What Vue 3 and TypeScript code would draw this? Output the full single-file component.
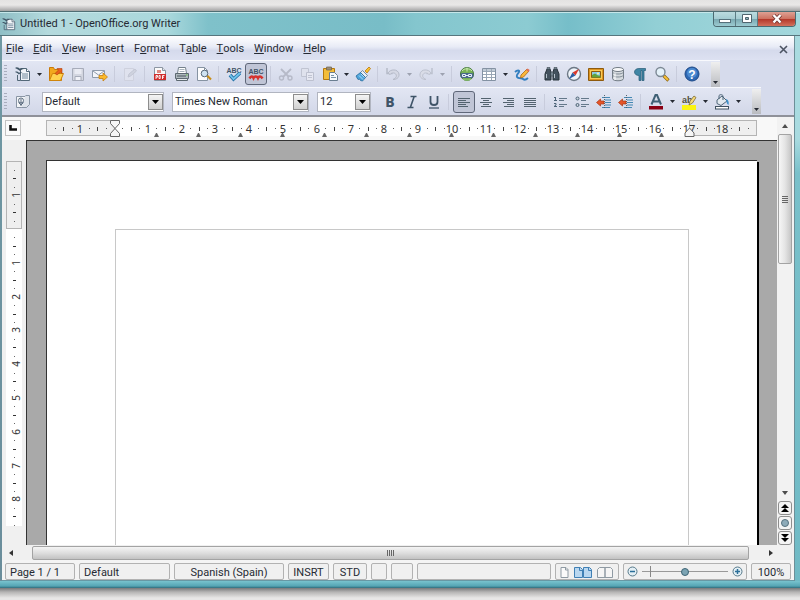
<script setup lang="ts">
import { ref } from 'vue'

interface ToolItem {
  kind: 'tool' | 'arrow' | 'sep'
  icon?: string
  label?: string
  pressed?: boolean
  disabled?: boolean
}

const tool = (icon: string, label: string): ToolItem => ({ kind: 'tool', icon, label })
const off = (icon: string, label: string): ToolItem => ({ kind: 'tool', icon, label, disabled: true })
const on = (icon: string, label: string): ToolItem => ({ kind: 'tool', icon, label, pressed: true })
const arrow = (label: string, disabled = false): ToolItem => ({ kind: 'arrow', label, disabled })
const sep: ToolItem = { kind: 'sep' }

const icons: Record<string, string> = {
  doc: '<path d="M5.500 2.500h6l3 3v9h-9z" fill="#f2f5f8" stroke="#536878"/><path d="M11.500 2.500v3h3" fill="#fff" stroke="#536878"/><path d="M7 8h6M7 10h6M7 12h6" stroke="#71899b"/><path d="M0 2c2-1.500 4 0 5 1 1.500-1 3-1 4 0-2 0-3 1-4 2C4 4 2 3 0 2zM0 6c2-1 3 0 4 .700C5 6 6.500 6 7.500 7 6 7 5 7.500 4 8.500 3 7.500 1.500 6.500 0 6z" fill="#3f5566"/><path d="M2.500 9v5.500h3" stroke="#536878" fill="none"/>',
  open: '<path d="M1.500 14.500v-13h4l1 2h7v11z" fill="#f2a81d" stroke="#c7790a"/><path d="M1.500 14.500l3-7h11l-3 7z" fill="#ffd24f" stroke="#cf850b"/><path d="M7 7.500l3.500-3.500L9 2.500h5v5L12.500 6 9 9z" fill="#e8601c" stroke="#b03f0c" stroke-width=".6"/>',
  save: '<path d="M2.500 2.500h11v12h-11z" fill="#d3d6e0" stroke="#a7acba"/><path d="M4.500 3h7v5h-7z" fill="#e9ebf3"/><path d="M5 10.500h6v4H5z" fill="#f1f2f8" stroke="#a7acba"/>',
  mail: '<path d="M.500 4.500h12v7H.500z" fill="#f4f5f9" stroke="#8f9bab"/><path d="M1 5l5.500 4L12 5" fill="none" stroke="#8f9bab"/><path d="M7 9.500h4V7l4.500 4-4.500 4v-2.500H7z" fill="#fbb92a" stroke="#c57d0c" stroke-width=".8"/>',
  edit: '<path d="M2.500 2.500h9v12h-9z" fill="#dfe2ee" stroke="#ced1de"/><path d="M6 11l1-3 6-5 1.500 2-6 5z" fill="#cfd3df" stroke="#c3c7d5"/>',
  pdf: '<path d="M2.500 1.500h8l3 3v10h-11z" fill="#fafafa" stroke="#8c96a3"/><path d="M10.500 1.500v3h3" fill="#dfe4ea" stroke="#8c96a3"/><path d="M5 4h4v3H5z" fill="#df8780"/><rect x="2" y="8" width="12" height="6" fill="#cf2c2c"/><path d="M4 13V9.500h1.500v1.700H4M7 9.500v3h1.200V9.500zM10.500 13V9.500h2M10.500 11.200h1.500" stroke="#fff" fill="none" stroke-width=".9"/>',
  print: '<path d="M4.500 1.500h7l1 6h-9z" fill="#fff" stroke="#74818c"/><path d="M5.500 3.500h5M5.500 5.500h5" stroke="#a9b4bd"/><path d="M1.500 7.500h13v5h-13z" fill="#aeb8bd" stroke="#5d6971"/><path d="M2.500 12.500h11v2h-11z" fill="#e6eaec" stroke="#5d6971"/><path d="M3 10h9" stroke="#4a575e"/><path d="M12 9h1.500" stroke="#5fc13d"/>',
  preview: '<path d="M1.500 1.500h7l3 3v10h-10z" fill="#fcfcfd" stroke="#8693a2"/><path d="M8.500 1.500v3h3" fill="none" stroke="#8693a2"/><path d="M11 9.500l4 4" stroke="#c98e17" stroke-width="2.200"/><circle cx="8.500" cy="7.500" r="3.300" fill="#cfe3f2" stroke="#596b7c"/>',
  spell: '<text x="8" y="6.500" text-anchor="middle" font-family="Liberation Sans" font-size="7" font-weight="700" fill="#3f5468">ABC</text><path d="M4 9l3.500 4L14 7" fill="none" stroke="#2674a8" stroke-width="3.600"/><path d="M4 9l3.500 4L14 7" fill="none" stroke="#70c4ec" stroke-width="1.800"/>',
  autospell: '<text x="8" y="7.500" text-anchor="middle" font-family="Liberation Sans" font-size="7" font-weight="700" fill="#3f5468">ABC</text><path d="M1.500 12.500c1.500-2.500 3-2.500 4-.500 1-2 3.500-2 4.500 0 1-2 3-2 4.500.500" fill="none" stroke="#d5332d" stroke-width="2.600"/>',
  cut: '<path d="M3 3l8 8M13 3l-8 8" stroke="#b6bac8" stroke-width="1.800"/><circle cx="3.500" cy="12" r="2" fill="none" stroke="#b6bac8" stroke-width="1.400"/><circle cx="12" cy="12" r="2" fill="none" stroke="#b6bac8" stroke-width="1.400"/>',
  copy: '<path d="M1.500 2.500h7v8h-7z" fill="#dfe2ed" stroke="#c0c4d2"/><path d="M6.500 6.500h7v8h-7z" fill="#e6e8f2" stroke="#bcc0cf"/><path d="M8 9.500h4M8 11.500h4" stroke="#c0c4d2"/>',
  paste: '<path d="M1.500 2.500h11v11h-11z" fill="#f3bd3a" stroke="#b4790f"/><path d="M4.500 1h5v3h-5z" fill="#9c8f78" stroke="#6e634f" stroke-width=".7"/><path d="M7.500 6.500h5l3 3v5h-8z" fill="#f7fafc" stroke="#6a7e90"/><path d="M9 9.500h3M9 11.500h5" stroke="#7892a8"/>',
  brush: '<path d="M10 5l4-4 1.500 1.500L12 7z" fill="#fac232" stroke="#b9790c" stroke-width=".8"/><path d="M7.500 4.500l5 5-2 2-5-5z" fill="#e7edf3" stroke="#5c7890" stroke-width=".8"/><path d="M5.500 6.500l5 5-3 3.500-2-.500-1-1.500-1.500.500L1 10z" fill="#4fa6dc" stroke="#27699b" stroke-width=".8"/><path d="M4 9.500l4 4M6 8l3.500 3.500" stroke="#b4dcf4"/>',
  undo: '<path d="M2 2v5.500h5.500" fill="none" stroke="#b5bac8" stroke-width="1.500"/><path d="M3 7c2-4 10-4.500 11 1 .5 4-3 5.500-6 5.500 3-1.500 4-3 3-5-1.500-2.500-5-1.500-6 0z" fill="#d5d8e4" stroke="#b5bac8"/>',
  redo: '<path d="M14 2v5.500H8.500" fill="none" stroke="#bcc1ce" stroke-width="1.500"/><path d="M13 7C11 3 3 2.500 2 8c-.5 4 3 5.500 6 5.500-3-1.500-4-3-3-5 1.500-2.500 5-1.500 6 0z" fill="#d9dce7" stroke="#bcc1ce"/>',
  link: '<circle cx="8" cy="8" r="6.500" fill="#77b255" stroke="#41773a"/><path d="M3 5c2-3 8-3 10 0M8 1.500v4" stroke="#cce9b1" fill="none"/><rect x="1.500" y="7" width="13" height="5" rx="2" fill="#49678b"/><path d="M3.500 8.500h3v2h-3zM9.500 8.500h3v2h-3zM6 9.500h4" fill="none" stroke="#e8f2fa"/><path d="M4 13c2 1.500 6 1.500 8 0" stroke="#9ed57c" fill="none"/>',
  table: '<path d="M1.500 2.500h13v12h-13z" fill="#fff" stroke="#8492a3"/><path d="M2 3h12v2.500H2z" fill="#c0cbd6"/><path d="M2 5.500h12M2 8.500h12M2 11.500h12M5.500 3v11M10.500 3v11" stroke="#9aa7b6"/>',
  draw: '<path d="M1 6c2-2 5-2 4 0s-3 3-2 5 5 1 6 2 3 1 5-1" fill="none" stroke="#337fc0" stroke-width="1.800"/><path d="M7 9l6-6 2 2-5.500 6-3 1z" fill="#fbb73b" stroke="#a96814" stroke-width=".8"/><path d="M12 4l1.500-1.500L15.700 4l-1.200 2z" fill="#de705a"/>',
  find: '<path d="M3 3h3l1 3v8H1V8zM13 3h-3L9 6v8h6V8z" fill="#43525f" stroke="#29343d"/><path d="M3 1.500h3v2H3zM10 1.500h3v2h-3zM6.500 6h3v4h-3z" fill="#73838f" stroke="#29343d" stroke-width=".5"/><path d="M2.500 8v4M10.500 8v4" stroke="#b3c0ca"/>',
  navigator: '<circle cx="8" cy="8" r="6.500" fill="#eef4fa" stroke="#6d7986" stroke-width="1.400"/><path d="M13 3L9.500 9.500l-3-3z" fill="#d93a2d"/><path d="M3 13l3.500-6.500 3 3z" fill="#2a5fa5"/>',
  gallery: '<path d="M.500 2.500h15v12H.500z" fill="#dc9420" stroke="#8e5a0d"/><path d="M2 4h12v9H2z" fill="#f9cb55"/><path d="M3.500 5.500h9v6h-9z" fill="#8acbe8" stroke="#8e5a0d"/><path d="M4 11.500V9l3-1.500 3 2h2.500v2z" fill="#63a43b"/><circle cx="10" cy="7.500" r="1" fill="#fff8a0"/>',
  data: '<path d="M2.500 3.500v9c0 3 11 3 11 0v-9" fill="#d5dade" stroke="#737d86"/><ellipse cx="8" cy="3.500" rx="5.500" ry="2" fill="#f7f8f9" stroke="#737d86"/><path d="M3 6.500c1 2 9 2 10 0M3 9.500c1 2 9 2 10 0" fill="none" stroke="#838e97"/><path d="M5 7v7" stroke="#fff"/>',
  pilcrow: '<path d="M13.500 2.500v2H12v10h-2v-10H9v10H7v-5c-6 0-6-7 0-7z" fill="#3f86a5" stroke="#275a75" stroke-width=".7"/>',
  zoom: '<path d="M9.500 9.500l5 5" stroke="#8e6814" stroke-width="3.200"/><path d="M10 10l4 4" stroke="#f7c139" stroke-width="1.800"/><circle cx="6.500" cy="6" r="4.500" fill="#e4f1f9" stroke="#7c8894" stroke-width="1.400"/>',
  help: '<circle cx="8" cy="8" r="7" fill="#2d68b4" stroke="#1d4987"/><circle cx="8" cy="7" r="5" fill="#4e8bd0"/><text x="8" y="12.500" text-anchor="middle" font-family="Liberation Sans" font-size="12" font-weight="700" fill="#fff">?</text>',
  styles: '<path d="M1.500 2.500h10v11h-10z" fill="#f2f4f7" stroke="#8995a5"/><path d="M10.500 1.500h4v9l-3 3h-5" fill="#dde2ea" stroke="#8995a5"/><circle cx="6" cy="6.500" r="2.500" fill="none" stroke="#5c6d80"/><path d="M6 5v7M3.500 8.500L6 11l2.500-2.500" stroke="#5c6d80" fill="none"/>',
  italic: '<path d="M6.500 2.500h6M3.500 13.500h6M10 3L6.500 13" stroke="#3f5468" stroke-width="1.600"/>',
  underline: '<path d="M4.500 2v6c0 4 7 4 7 0V2" fill="none" stroke="#3f5468" stroke-width="1.800"/><path d="M3 14h10" stroke="#3f5468" stroke-width="1.300"/>',
  left: '<path d="M2 4.500h12M2 6.500h8M2 8.500h12M2 10.500h8M2 12.500h10" stroke="#53636f"/>',
  center: '<path d="M3 4.500h10M5 6.500h6M2 8.500h12M5 10.500h6M3 12.500h10" stroke="#53636f"/>',
  right: '<path d="M3 4.500h11M7 6.500h7M3 8.500h11M7 10.500h7M4 12.500h10" stroke="#53636f"/>',
  justify: '<path d="M2 4.500h12M2 6.500h12M2 8.500h12M2 10.500h12M2 12.500h12" stroke="#53636f"/>',
  numbers: '<path d="M3.500 3v4M2 3.500h1.500M2 6.500h3M2 9.500h2v1.500L2 12.500h3" fill="none" stroke="#4d6478"/><path d="M7 4.500h8M7 6.500h5M7 10.500h8M7 12.500h5" stroke="#64788a"/>',
  bullets: '<circle cx="3.500" cy="4.500" r="1.500" fill="#c9d2da" stroke="#4d6478"/><circle cx="3.500" cy="11" r="1.500" fill="#c9d2da" stroke="#4d6478"/><path d="M7 4.500h8M7 6.500h5M7 10.500h8M7 12.500h5" stroke="#64788a"/>',
  outdent: '<path d="M6 3.500h8M9 6h6M9 8.500h6M9 11h6M6 13.500h8" stroke="#4588b3" stroke-width="1.200"/><path d="M8.500 1v14" stroke="#53636f" stroke-dasharray="1 1"/><path d="M.500 8.500l4-3.500v2H8v3H4.500v2z" fill="#e6552a" stroke="#a83713" stroke-width=".7"/>',
  indent: '<path d="M6 3.500h8M9 6h6M9 8.500h6M9 11h6M6 13.500h8" stroke="#4588b3" stroke-width="1.200"/><path d="M8.500 1v14" stroke="#53636f" stroke-dasharray="1 1"/><path d="M.500 8.500l4-3.500v2H8v3H4.500v2z" fill="#e6552a" stroke="#a83713" stroke-width=".7"/>',
  color: '<path d="M3.500 10.500L7.500 1h1.500l4 9.500M5 7.500h6.500" fill="none" stroke="#3f6075" stroke-width="2"/><rect x="1" y="12" width="14" height="3.500" fill="#8b0014"/>',
  highlight: '<rect x="1" y="11" width="14" height="5" fill="#fbf413"/><text x="1" y="9" font-family="Liberation Sans" font-size="9" font-weight="700" fill="#514f3a">ab</text><path d="M8 11l1-4 4-5 2 1.500-3.500 5.500z" fill="#f6d979" stroke="#7a6a34" stroke-width=".8"/>',
  fill: '<path d="M3 6l5-4 5 5-6 4.500-4-2z" fill="#e2e9ef" stroke="#4d6478"/><path d="M5 5V2c0-2 4-1.500 4 0v4" fill="none" stroke="#4d6478"/><path d="M12 5c3 1 3 4 2.500 6-2-1-2-3-2.500-6z" fill="#3e91c8"/><rect x="1.500" y="12.500" width="13" height="2.500" fill="#fff" stroke="#3f5160"/>',
}

const standardBar: ToolItem[] = [
  tool('doc', 'New'), arrow('New options'), tool('open', 'Open'), off('save', 'Save'), tool('mail', 'Document as E-mail'), sep,
  off('edit', 'Edit File'), sep,
  tool('pdf', 'Export as PDF'), tool('print', 'Print'), tool('preview', 'Page Preview'), sep,
  tool('spell', 'Spellcheck'), on('autospell', 'AutoSpellcheck'), sep,
  off('cut', 'Cut'), off('copy', 'Copy'), tool('paste', 'Paste'), arrow('Paste options'), tool('brush', 'Format Paintbrush'), sep,
  off('undo', 'Undo'), arrow('Undo history', true), off('redo', 'Redo'), arrow('Redo history', true), sep,
  tool('link', 'Hyperlink'), tool('table', 'Insert Table'), arrow('Table size'), tool('draw', 'Show Draw Functions'), sep,
  tool('find', 'Find & Replace'), tool('navigator', 'Navigator'), tool('gallery', 'Gallery'), tool('data', 'Data Sources'),
  tool('pilcrow', 'Nonprinting Characters'), tool('zoom', 'Zoom'), sep,
  tool('help', 'Help'),
]

const formatBar: ToolItem[] = [
  tool('italic', 'Italic'), tool('underline', 'Underline'), sep,
  on('left', 'Align Left'), tool('center', 'Centered'), tool('right', 'Align Right'), tool('justify', 'Justified'), sep,
  tool('numbers', 'Numbering'), tool('bullets', 'Bullets'), tool('outdent', 'Decrease Indent'), tool('indent', 'Increase Indent'), sep,
  tool('color', 'Font Color'), arrow('Font colors'), tool('highlight', 'Highlighting'), arrow('Highlight colors'),
  tool('fill', 'Background Color'), arrow('Background colors'),
]

const menus = ['_File', '_Edit', '_View', '_Insert', 'F_ormat', 'T_able', '_Tools', '_Window', '_Help'].map((m) => {
  const i = m.indexOf('_')
  return { before: m.slice(0, i), key: m[i + 1], after: m.slice(i + 2) }
})

const style = ref('Default')
const font = ref('Times New Roman')
const size = ref('12')
const zoom = ref(50)

// Ruler scale: pixels per centimetre, and offset of the text area's edge.
const CM = 33.8
const MARGIN = 68

function marks(from: number, to: number) {
  const list: { pos: number; label: string; half: boolean }[] = []
  for (let q = from; q <= to; q++) {
    if (q === 0) continue
    list.push({
      pos: Math.round(MARGIN + (q * CM) / 4),
      label: q % 4 === 0 ? String(Math.abs(q / 4)) : '',
      half: Math.abs(q % 4) === 2,
    })
  }
  return list
}

const hMarks = marks(-7, 75)
const vMarks = marks(-7, 35)
const tabStops = Array.from({ length: 13 }, (_, i) => Math.round(MARGIN + (i + 1) * CM * 1.245))
</script>

<template>
  <div class="desktop">
    <div class="window">
      <header class="titlebar">
        <svg class="icon" viewBox="0 0 16 16" v-html="icons.doc"></svg>
        <h1>Untitled 1 - OpenOffice.org Writer</h1>
        <div class="caption">
          <button type="button" aria-label="Minimize">
            <svg width="14" height="12"><rect x="1.500" y="6.500" width="11" height="3" fill="#fff" stroke="#56707a" /></svg>
          </button>
          <button type="button" aria-label="Maximize">
            <svg width="12" height="12"><path d="M1.500 1.500h9v8h-9z" fill="#fff" stroke="#50656e" /><path d="M4.500 4.500h3v2h-3z" fill="#8fb3bb" stroke="#50656e" /></svg>
          </button>
          <button type="button" class="close" aria-label="Close">
            <svg width="12" height="12"><path d="M2.500 2l7 7.500M9.500 2l-7 7.500" stroke="#6d342f" stroke-width="4" /><path d="M2.500 2l7 7.500M9.500 2l-7 7.500" stroke="#fff" stroke-width="2.400" /></svg>
          </button>
        </div>
      </header>

      <div class="client">
        <nav class="menubar">
          <button v-for="m in menus" :key="m.key + m.after" type="button">{{ m.before }}<u>{{ m.key }}</u>{{ m.after }}</button>
          <button type="button" class="close-doc" aria-label="Close Document">
            <svg width="9" height="9"><path d="M1 1l7 7M8 1l-7 7" stroke="#4c5463" stroke-width="1.600" /></svg>
          </button>
        </nav>

        <div class="toolbars">
          <div class="toolbar">
            <span class="grip"></span>
            <template v-for="(t, i) in standardBar" :key="i">
              <span v-if="t.kind === 'sep'" class="sep"></span>
              <button v-else-if="t.kind === 'arrow'" type="button" class="drop" :disabled="t.disabled" :aria-label="t.label">
                <svg width="5" height="3"><path d="M0 0h5L2.500 3z" fill="currentColor" /></svg>
              </button>
              <button v-else type="button" class="tool" :class="{ pressed: t.pressed }" :disabled="t.disabled" :aria-label="t.label">
                <svg class="icon" viewBox="0 0 16 16" v-html="icons[t.icon!]"></svg>
              </button>
            </template>
            <button type="button" class="more" aria-label="More standard buttons">
              <svg width="5" height="3"><path d="M0 0h5L2.500 3z" fill="currentColor" /></svg>
            </button>
          </div>

          <div class="toolbar">
            <span class="grip"></span>
            <button type="button" class="tool" aria-label="Styles and Formatting">
              <svg class="icon" viewBox="0 0 16 16" v-html="icons.styles"></svg>
            </button>
            <div class="combo combo-style">
              <select v-model="style" aria-label="Apply Style"><option>Default</option><option>Heading 1</option></select>
              <span class="combo-arrow"><svg width="7" height="4"><path d="M0 0h7L3.500 4z" /></svg></span>
            </div>
            <div class="combo combo-font">
              <select v-model="font" aria-label="Font Name"><option>Times New Roman</option><option>Arial</option></select>
              <span class="combo-arrow"><svg width="7" height="4"><path d="M0 0h7L3.500 4z" /></svg></span>
            </div>
            <div class="combo combo-size">
              <select v-model="size" aria-label="Font Size"><option>10</option><option>12</option><option>14</option></select>
              <span class="combo-arrow"><svg width="7" height="4"><path d="M0 0h7L3.500 4z" /></svg></span>
            </div>
            <span class="space"></span>
            <button type="button" class="tool bold" aria-label="Bold">B</button>
            <template v-for="(t, i) in formatBar" :key="i">
              <span v-if="t.kind === 'sep'" class="sep"></span>
              <button v-else-if="t.kind === 'arrow'" type="button" class="drop" :aria-label="t.label">
                <svg width="5" height="3"><path d="M0 0h5L2.500 3z" fill="currentColor" /></svg>
              </button>
              <button v-else type="button" class="tool" :class="{ pressed: t.pressed }" :aria-label="t.label">
                <svg class="icon" viewBox="0 0 16 16" v-html="icons[t.icon!]"></svg>
              </button>
            </template>
            <span class="space"></span>
            <button type="button" class="more" aria-label="More formatting buttons">
              <svg width="5" height="3"><path d="M0 0h5L2.500 3z" fill="currentColor" /></svg>
            </button>
          </div>
        </div>

        <main class="workspace">
          <div class="editor">
            <div class="ruler-row">
              <button type="button" class="tab-kind" aria-label="Tab type">
                <svg width="8" height="6"><path d="M1.500 0v4.500H8" fill="none" stroke="#111" stroke-width="2.600" /></svg>
              </button>
              <svg class="h-ruler">
                <rect width="100%" height="16" fill="#fff" />
                <rect x=".500" y=".500" width="68" height="15" fill="#efefef" stroke="#b4b4b4" />
                <rect x="643.500" y=".500" width="67" height="15" fill="#efefef" stroke="#b4b4b4" />
                <template v-for="m in hMarks" :key="m.pos">
                  <text v-if="m.label" class="mark" :x="m.pos" y="13" text-anchor="middle">{{ m.label }}</text>
                  <rect v-else-if="m.half" :x="m.pos" y="7" width="1" height="4" fill="#444" />
                  <rect v-else :x="m.pos" y="8" width="1" height="1" fill="#555" />
                </template>
                <path v-for="t in tabStops" :key="t" :d="`M${t - 2} 17l2-4h1l2 4z`" fill="#666" />
                <path d="M64.500 .500h9v3l-4.500 5 4.500 5v3h-9v-3l4.500-5-4.500-5z" fill="#f6f6f6" stroke="#666" />
                <path d="M643.500 8l4.500 5v3.500h-9V13z" fill="#f6f6f6" stroke="#666" />
              </svg>
            </div>
            <div class="document-row">
              <svg class="v-ruler">
                <rect width="16" height="364" y="1" fill="#fff" />
                <rect x=".500" y=".500" width="15" height="67" fill="#efefef" stroke="#b4b4b4" />
                <template v-for="m in vMarks" :key="m.pos">
                  <text v-if="m.label" class="mark mark-v" :transform="`translate(14 ${m.pos}) rotate(-90)`" text-anchor="middle">{{ m.label }}</text>
                  <rect v-else-if="m.half" x="7" :y="m.pos" width="3" height="1" fill="#333" />
                  <rect v-else x="8" :y="m.pos" width="1" height="1" fill="#666" />
                </template>
              </svg>
              <div class="canvas">
                <article class="page"><div class="text-area" contenteditable="true" aria-label="Document text"></div></article>
              </div>
            </div>
          </div>

          <div class="v-scroll">
            <button type="button" class="scroll-arrow" aria-label="Scroll up"><svg width="6" height="4"><path d="M0 4h6L3 0z" fill="#4d4d4d" /></svg></button>
            <div class="v-track"><div class="v-thumb"><svg width="6" height="8"><path d="M0 1.500h6M0 3.500h6M0 5.500h6M0 7.500h6" stroke="#666" /></svg></div></div>
            <button type="button" class="scroll-arrow" aria-label="Scroll down"><svg width="6" height="4"><path d="M0 0h6L3 4z" fill="#4d4d4d" /></svg></button>
            <div class="nav-buttons">
              <button type="button" aria-label="Previous Page"><svg width="8" height="8"><path d="M4 0l4 4H0zM4 4l4 4H0z" /></svg></button>
              <button type="button" aria-label="Navigation"><svg width="10" height="10"><circle cx="5" cy="5" r="3.500" fill="#8eabb9" stroke="#56717e" /></svg></button>
              <button type="button" aria-label="Next Page"><svg width="8" height="8"><path d="M4 4L0 0h8zM4 8L0 4h8z" /></svg></button>
            </div>
          </div>
        </main>

        <div class="h-scroll">
          <button type="button" class="scroll-arrow" aria-label="Scroll left"><svg width="4" height="6"><path d="M4 0v6L0 3z" fill="#333" /></svg></button>
          <div class="h-thumb"><svg width="8" height="6"><path d="M.500 0v6M2.500 0v6M4.500 0v6M6.500 0v6" stroke="#666" /></svg></div>
          <button type="button" class="scroll-arrow" aria-label="Scroll right"><svg width="4" height="6"><path d="M0 0v6l4-3z" fill="#333" /></svg></button>
        </div>

        <footer class="statusbar">
          <span class="field w-page">Page 1 / 1</span>
          <span class="field w-style">Default</span>
          <span class="field centered w-lang">Spanish (Spain)</span>
          <span class="field centered w-insert">INSRT</span>
          <span class="field centered w-std">STD</span>
          <span class="field w-flag"></span>
          <span class="field w-sign"></span>
          <span class="field grow"></span>
          <span class="field views">
            <button type="button" aria-label="Single page"><svg width="9" height="11"><path d="M1 .500h5l2 2v8H1z" fill="#fafafa" stroke="#8f9aa3" /><path d="M5.500 1v2H8" fill="none" stroke="#8f9aa3" /></svg></button>
            <button type="button" aria-label="Side by side"><svg width="18" height="11"><path d="M.500 .500h6l2 2v8h-8zM9.500 .500h6l2 2v8h-8z" fill="#b9d7f0" stroke="#4080b5" /><path d="M5.500 1v2.500h3M14.500 1v2.500h3" fill="none" stroke="#4080b5" /></svg></button>
            <button type="button" aria-label="Book mode"><svg width="16" height="11"><path d="M2.500 .500H8v10H.500v-8zM8 .500h5.500l2 2v8H8z" fill="#f5f5f5" stroke="#8f9aa3" /></svg></button>
          </span>
          <span class="field zoom">
            <button type="button" aria-label="Zoom out"><svg width="11" height="11"><circle cx="5.500" cy="5.500" r="4.500" fill="#e3eff5" stroke="#57798a" /><path d="M3 5.500h5" stroke="#2b6f99" stroke-width="1.500" /></svg></button>
            <input v-model="zoom" type="range" min="0" max="100" aria-label="Zoom factor" />
            <button type="button" aria-label="Zoom in"><svg width="11" height="11"><circle cx="5.500" cy="5.500" r="4.500" fill="#e3eff5" stroke="#57798a" /><path d="M3 5.500h5M5.500 3v5" stroke="#2b6f99" stroke-width="1.500" /></svg></button>
          </span>
          <span class="field centered w-percent">100%</span>
        </footer>
      </div>
    </div>
  </div>
</template>

<style>
body {
  margin: 0;
}
</style>

<style scoped>
* {
  box-sizing: border-box;
}

button {
  display: flex;
  align-items: center;
  justify-content: center;
  margin: 0;
  padding: 0;
  border: 0;
  background: none;
  color: inherit;
  font: inherit;
}

svg {
  flex: none;
  display: block;
}

.desktop {
  display: flex;
  min-width: 780px;
  height: 100vh;
  padding: 11px 0 12px;
  background: linear-gradient(#e4e3e2 0, #e9e8e7 5px, #a3a3a3 11px, #e8e8e8 12px, #e8e8e8 calc(100% - 13px), #77787a calc(100% - 12px), #b5b4b3 calc(100% - 8px), #e8e7e6 calc(100% - 2px));
  color: #262a33;
  font: 12px/16px Roboto, "Noto Sans", sans-serif;
}

.window {
  flex: 1;
  display: flex;
  flex-direction: column;
  min-width: 0;
  padding: 0 5px 7px 2px;
  border-top: 1px solid #4f6e74;
  background:
    linear-gradient(#79c3ce, #55a5b4 5px, #2f6b7b 7px) bottom / 100% 7px no-repeat,
    linear-gradient(#a9dbe0, #a9dbe0 22%, #79c0ca 28%, #70bac5) right / 5px 100% no-repeat,
    linear-gradient(#6f99a4, #6a8d9b) left / 2px 100% no-repeat;
}

.titlebar {
  display: flex;
  align-items: center;
  height: 24px;
  margin: 0 -5px 0 -2px;
  padding-left: 2px;
  border-top: 1px solid #c5e7ea;
  border-bottom: 1px solid #57767e;
  background: linear-gradient(90deg, #8fbfc6 0, #b4dadd 6%, #a9d8dc 21%, #7fc1ca 26%, #78bdc7 48%, #84c6ce 52%, #8ccbd2 66%, #76bec9 71%, #92cfd5 82%, #a3d7dc);
}

.icon {
  width: 16px;
  height: 16px;
}

.titlebar .icon {
  width: 14px;
  height: 14px;
}

h1 {
  flex: 1;
  margin: 0;
  padding-left: 4px;
  font-size: 11px;
  font-weight: 400;
}

.caption {
  display: flex;
  align-self: flex-start;
  margin: -1px 4px 0 0;
  border: 1px solid #4c6970;
  border-top: 0;
  border-radius: 0 0 4px 4px;
  overflow: hidden;
}

.caption button {
  width: 22px;
  height: 14px;
  border-right: 1px solid #5c7c84;
  background: linear-gradient(#bcdce0, #a5ccd2 48%, #7aa9b2 52%, #9ccbd1);
}

.caption .close {
  width: 37px;
  border-right: 0;
  background: linear-gradient(#dea194, #cd7261 48%, #b4382a 52%, #d2705c);
}

.client {
  flex: 1;
  display: flex;
  flex-direction: column;
  min-height: 0;
  border-right: 1px solid #6d8f98;
  background: #f0f0f0;
}

.menubar {
  display: flex;
  align-items: center;
  gap: 10px;
  height: 24px;
  padding: 2px 6px 0 4px;
  background: linear-gradient(#fff, #e8ebf6 45%, #d5daec 60%, #dde1f1);
  font-size: 11px;
}

.menubar u {
  text-underline-offset: 1px;
}

.menubar .close-doc {
  margin-left: auto;
}

.toolbars {
  border-bottom: 2px solid #8f9199;
  background: #d6dbec;
}

.toolbar {
  display: flex;
  align-items: center;
  width: max-content;
  height: 28px;
  border-top: 1px solid #f8f9fd;
  background: linear-gradient(#e2e6f3, #d2d7e8);
}

.toolbar:first-child {
  height: 27px;
}

.grip {
  width: 3px;
  height: 18px;
  margin: 0 5px 0 2px;
  background: repeating-linear-gradient(#a8adbd 0 1px, transparent 1px 3px);
}

.tool {
  width: 22px;
  height: 22px;
}

.tool.pressed {
  border: 1px solid #5f6779;
  border-radius: 3px;
  background: #c0c5d6;
}

.bold {
  color: #3f5468;
  font: 800 14px/20px "Noto Sans", sans-serif;
}

.drop {
  width: 11px;
  height: 22px;
}

.drop:disabled {
  color: #9da2b0;
}

.sep {
  width: 1px;
  height: 16px;
  margin: 0 4px 0 3px;
  background: #c8ccdc;
}

.space {
  width: 8px;
}

.more {
  align-items: flex-end;
  width: 9px;
  height: 25px;
  padding-bottom: 3px;
  background: linear-gradient(#efefef, #b9bbc0);
}

.tool + .more {
  margin-left: 8px;
}

.combo {
  position: relative;
  height: 20px;
  margin-left: 8px;
}

.combo-style {
  width: 122px;
}

.combo-font {
  width: 137px;
}

.combo-size {
  width: 54px;
}

.combo select {
  width: 100%;
  height: 100%;
  padding: 0 18px 0 2px;
  border: 1px solid #b1b5c0;
  border-radius: 0;
  outline: 0;
  appearance: none;
  background: #fff;
  color: inherit;
  font: inherit;
  font-size: 11px;
}

.combo-arrow {
  position: absolute;
  top: 2px;
  right: 1px;
  display: flex;
  align-items: center;
  justify-content: center;
  width: 15px;
  height: 16px;
  border: 1px solid #8d8d8d;
  background: linear-gradient(#f4f4f4, #d0d0d0);
  pointer-events: none;
}

.workspace {
  flex: 1;
  display: flex;
  min-height: 0;
}

.editor {
  flex: 1;
  display: flex;
  flex-direction: column;
  min-width: 0;
}

.ruler-row {
  display: flex;
  align-items: flex-start;
  gap: 25px;
  height: 23px;
  padding: 3px 20px 0 3px;
  background: #f8f8f8;
}

.tab-kind {
  width: 16px;
  height: 16px;
  border: 1px solid #c2c2c2;
  background: #fbfbfb;
}

.h-ruler {
  flex: 1;
  height: 16px;
  overflow: visible;
}

.mark {
  fill: #333;
  font: 11px "Noto Sans", sans-serif;
}

.mark-v {
  font-size: 10px;
}

.document-row {
  flex: 1;
  display: flex;
  min-height: 0;
}

.v-ruler {
  width: 16px;
  height: 100%;
  margin: 21px 4px 0;
}

.canvas {
  flex: 1;
  display: flex;
  min-width: 0;
  padding: 19px 20px 0 19px;
  border-top: 1px solid #333;
  border-left: 1px solid #333;
  background: #a9a9a9;
}

.page {
  flex: 1;
  display: flex;
  padding: 68px;
  padding-bottom: 0;
  border: 1px solid #333;
  border-width: 1px 0 0 1px;
  background: #fff;
  box-shadow: 2px 2px 0 #000;
}

.text-area {
  flex: 1;
  border: 1px solid #c8c8c8;
  border-bottom: 0;
  outline: 0;
}

.v-scroll {
  display: flex;
  flex-direction: column;
  width: 17px;
  padding: 0 2px 0 1px;
  background: #f2f2f2;
}

.v-scroll .scroll-arrow {
  height: 17px;
}

.v-track {
  flex: 1;
}

.v-thumb {
  display: flex;
  align-items: center;
  justify-content: center;
  height: 37%;
  border: 1px solid #a3a3a3;
  border-radius: 2px;
  background: linear-gradient(90deg, #f6f6f6, #e4e4e4 50%, #c6c6c6);
}

.nav-buttons {
  display: flex;
  flex-direction: column;
  gap: 1px;
}

.nav-buttons button {
  height: 14px;
  border: 1px solid #8e8e8e;
  border-radius: 3px;
  background: #f4f4f4;
}

.h-scroll {
  display: flex;
  height: 15px;
  padding-right: 15px;
  background: #f0f0f0;
}

.h-scroll .scroll-arrow {
  width: 17px;
}

.h-thumb {
  flex: 1;
  display: flex;
  align-items: center;
  justify-content: center;
  height: 14px;
  margin: 1px 13px 0;
  border: 1px solid #a3a3a3;
  border-radius: 2px;
  background: linear-gradient(#f4f4f4, #dedede 50%, #c2c2c2);
}

.statusbar {
  display: flex;
  align-items: center;
  gap: 4px;
  height: 21px;
  padding: 3px 3px 0;
  border-bottom: 1px solid #6898a4;
  background: #f4f4f4;
  font-size: 11px;
}

.field {
  display: flex;
  align-items: center;
  height: 17px;
  padding: 1px 4px 0;
  border: 1px solid #b2b2b2;
  border-radius: 2px;
  background: #f0f0f0;
  line-height: 17px;
  white-space: nowrap;
}

.centered {
  justify-content: center;
  padding: 1px 0 0;
}

.w-page {
  width: 70px;
}

.w-style {
  width: 91px;
}

.w-lang {
  width: 110px;
}

.w-insert {
  width: 41px;
}

.w-std {
  width: 34px;
}

.w-flag {
  width: 16px;
}

.w-sign {
  width: 22px;
}

.grow {
  flex: 1;
}

.views {
  gap: 5px;
  width: 64px;
}

.zoom {
  gap: 4px;
  width: 124px;
  padding: 0 3px;
}

.zoom input {
  flex: 1;
  min-width: 0;
  height: 11px;
  margin: 0;
  appearance: none;
  background:
    linear-gradient(#888, #888) 8px 0 / 1px 100% no-repeat,
    linear-gradient(#999, #999) center / 100% 1px no-repeat;
}

.zoom input::-webkit-slider-thumb {
  width: 8px;
  height: 8px;
  border: 1px solid #3d6475;
  border-radius: 4px;
  appearance: none;
  background: #7ba3b3;
}

.w-percent {
  width: 40px;
}
</style>
